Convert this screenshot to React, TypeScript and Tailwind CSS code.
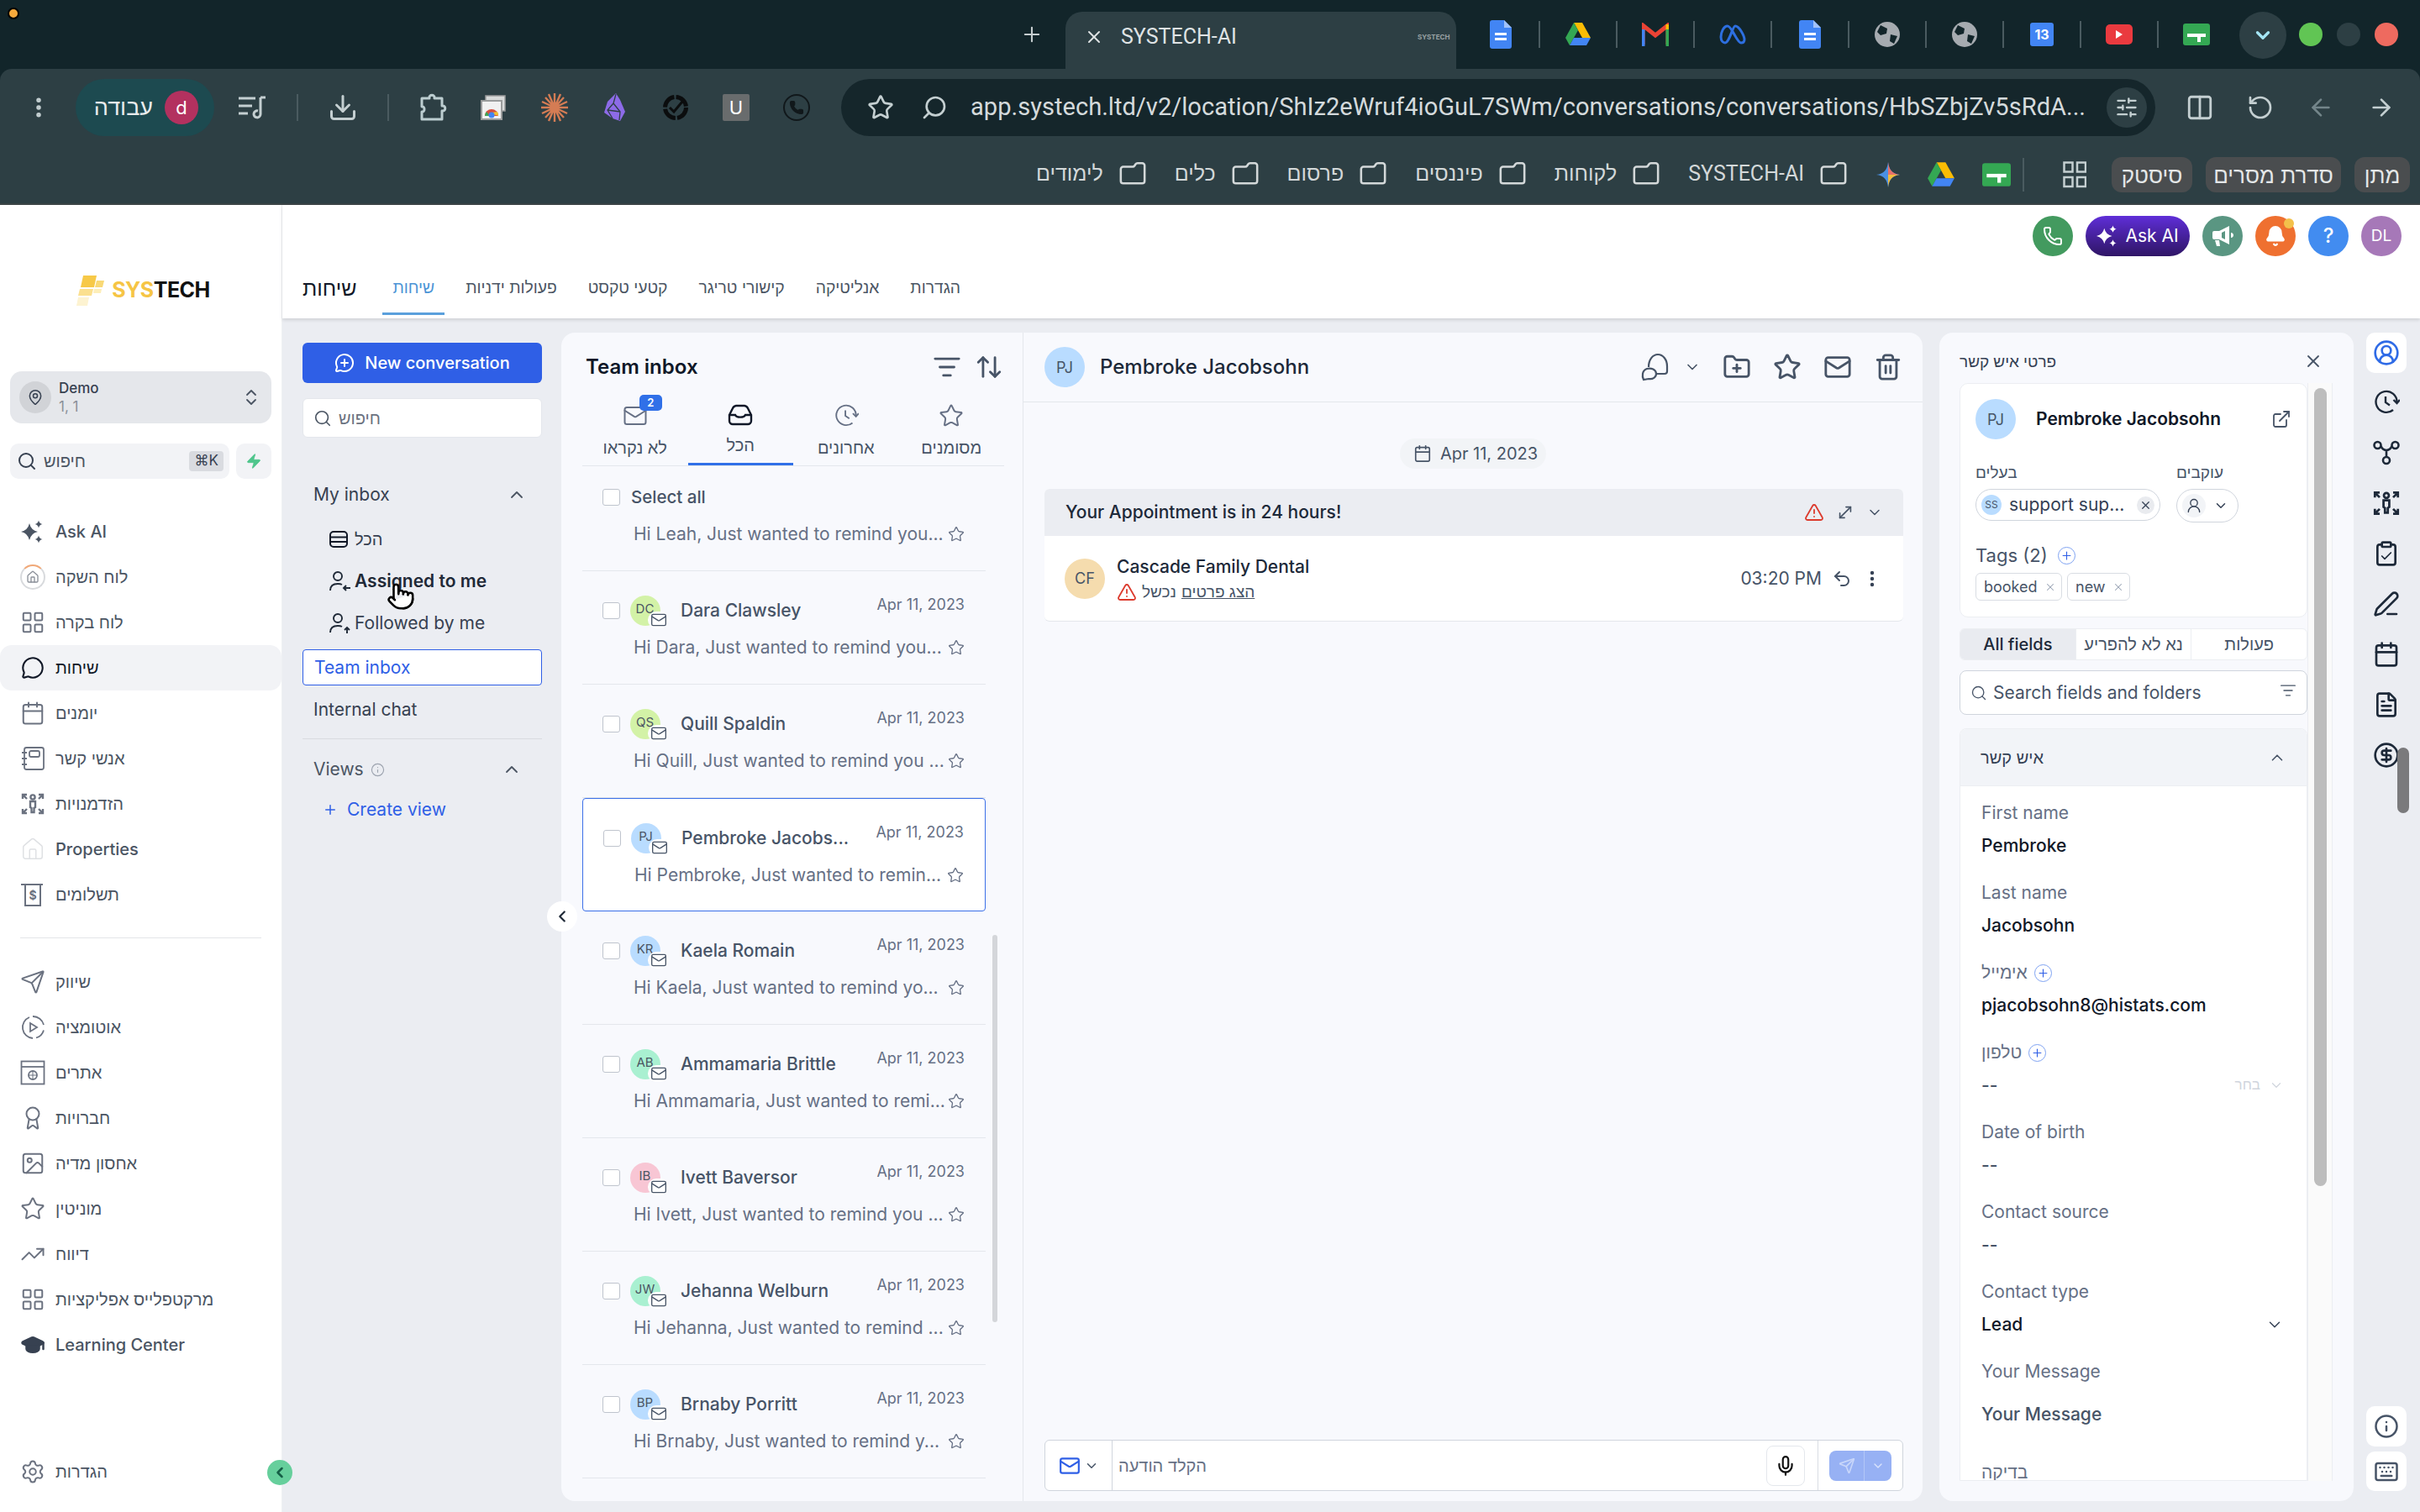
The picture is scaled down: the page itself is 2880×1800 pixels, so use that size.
import {
  ArrowDownUp, ArrowLeft, ArrowRight, Award, Calendar, Check, ChevronDown, ChevronLeft, ChevronUp, ChevronsUpDown,
  CircleDollarSign, CircleUserRound, Clipboard, Download, EllipsisVertical, ExternalLink, FileText, Folder, FolderPlus,
  GraduationCap, Image, Info, Keyboard, LayoutGrid, ListFilter, Mail, MapPin, MessageCircle, MessageCirclePlus,
  Mic, PenLine, Phone, Plus, Pointer, RotateCcw, Search, Send, Settings, SlidersHorizontal, Star,
  Trash2, TrendingUp, TriangleAlert, Undo2, UserRound, X, Zap, Bell, MoveDiagonal, Columns2, House,
} from 'lucide-react';
import type { ReactNode } from 'react';

// --- browser chrome glyphs ---
function DocIcon() {
  return (
    <svg width="26" height="34" viewBox="0 0 26 34">
      <path d="M3 0h14l9 9v22a3 3 0 0 1-3 3H3a3 3 0 0 1-3-3V3a3 3 0 0 1 3-3z" fill="#4285f4" />
      <path d="M17 0l9 9h-9z" fill="#a1c2fa" />
      <rect x="6" y="15" width="14" height="3" fill="#fff" />
      <rect x="6" y="21" width="14" height="3" fill="#fff" />
    </svg>
  );
}

function DriveIcon({ size = 32 }: { size?: number }) {
  return (
    <svg width={size} height={size} viewBox="0 0 32 32">
      <path d="M11 2h10l10 18H21z" fill="#fbbc04" />
      <path d="M11 2L1 20l5 9 10-18z" fill="#34a853" />
      <path d="M6 29h20l5-9H11z" fill="#4285f4" />
    </svg>
  );
}

function GmailIcon() {
  return (
    <svg width="32" height="28" viewBox="0 0 32 28">
      <path d="M1 26V3l15 12L31 3v23" fill="none" stroke="#ea4335" strokeWidth="5" />
      <path d="M1 28V8" stroke="#4285f4" strokeWidth="5" />
      <path d="M31 28V8" stroke="#34a853" strokeWidth="5" />
      <path d="M31 8V2" stroke="#fbbc04" strokeWidth="5" />
    </svg>
  );
}

function MetaIcon() {
  return (
    <svg width="32" height="26" viewBox="0 0 32 26" fill="none" stroke="#2d6fe0" strokeWidth="3">
      <path d="M10 3c-5 0-8 8-8 13 0 5 3 7 5 7 5 0 9-20 12-20 5 0 11 12 11 16 0 3-2 4-4 4-5 0-11-20-16-20z" />
    </svg>
  );
}

function GlobeIcon() {
  return (
    <svg width="32" height="32" viewBox="0 0 32 32">
      <circle cx="16" cy="16" r="15" fill="#a6abb0" />
      <path d="M8 5l8 4-1 6-7 2-4-4zM20 16l8 2-4 9-5-3z" fill="#12252a" />
    </svg>
  );
}

function SheetsIcon({ size = 32 }: { size?: number }) {
  return (
    <svg width={size} height={size} viewBox="0 0 32 32">
      <rect x="0" y="3" width="32" height="26" rx="3" fill="#34a853" />
      <rect x="5" y="15" width="22" height="4" fill="#fff" />
      <rect x="17" y="15" width="4" height="10" fill="#fff" />
    </svg>
  );
}

function PuzzleIcon() {
  return (
    <svg width="34" height="34" viewBox="0 0 34 34" fill="none" stroke="#bccdd0" strokeWidth="3" strokeLinejoin="round">
      <path d="M3 6h9c-1-5 7-5 6 0h9v9c5-1 5 7 0 6v10H3V22c4 1 4-7 0-6z" />
    </svg>
  );
}

function WebStoreIcon() {
  return (
    <svg width="30" height="30" viewBox="0 0 30 30">
      <rect x="6" y="1" width="23" height="18" fill="#d8dada" stroke="#9a9c9c" strokeWidth="1.5" />
      <rect x="1" y="7" width="24" height="22" fill="#f1f1f1" stroke="#9a9c9c" strokeWidth="2" />
      <path d="M5 25a8 8 0 0 1 16 0z" fill="#d9503f" />
      <path d="M13 25a8 8 0 0 1 8 0v0a8 8 0 0 0-1-5l-7 1z" fill="#f2c230" />
      <path d="M5 25a8 8 0 0 1 2-5l4 5z" fill="#3aa757" />
      <circle cx="13" cy="24" r="3.500" fill="#4285f4" />
    </svg>
  );
}

function ObsidianIcon() {
  return (
    <svg width="26" height="34" viewBox="0 0 26 34">
      <path d="M15 0l5 8 6 14-6 11-9-3-10-7 4-13z" fill="#8d6be8" />
      <path d="M15 1l-3 11 8 10-1 10M12 12L5 20l6 10M5 20l15 2" fill="none" stroke="#2d3f44" strokeWidth="1.300" />
    </svg>
  );
}

function TaskRingIcon() {
  return (
    <svg width="32" height="32" viewBox="0 0 32 32" fill="none" stroke="#0b0d0e">
      <circle cx="16" cy="16" r="12.500" strokeWidth="5" strokeDasharray="17.500 2.200" />
      <path d="M9 16l5 5 10-12" strokeWidth="3" />
    </svg>
  );
}

function LogoMark() {
  return (
    <svg width="34" height="36" viewBox="0 0 34 36">
      <path d="M8 0h16l-3 14H5z" fill="#f7c948" />
      <path d="M24 6h9l-2 8h-9z" fill="#f9d976" />
      <path d="M4 16h16l-2 8H2z" fill="#fbe08f" />
      <path d="M21 16h9l-1 5h-9z" fill="#fdeeb9" />
      <path d="M2 26h13l-2 10H0z" fill="#fdf3d1" />
    </svg>
  );
}

// --- app glyphs that lucide doesn't have in this shape ---
function OpportunityIcon({ size = 28, color = '#6b7280' }: { size?: number; color?: string }) {
  return (
    <svg width={size} height={size} viewBox="0 0 28 28" fill="none" stroke={color} strokeWidth="2.4">
      <circle cx="14" cy="6" r="2.600" />
      <path d="M11 11h6v7l-1.500 1v5h-3v-5L11 18z" />
      <path d="M2 8V3h5M2 3l5 5M26 8V3h-5M26 3l-5 5M2 20v5h5M2 25l5-5M26 20v5h-5M26 25l-5-5" />
    </svg>
  );
}

function sparkle(cx: number, cy: number, r: number) {
  const k = r * 0.18;
  return `M${cx} ${cy - r}Q${cx + k} ${cy - k} ${cx + r} ${cy}Q${cx + k} ${cy + k} ${cx} ${cy + r}Q${cx - k} ${cy + k} ${cx - r} ${cy}Q${cx - k} ${cy - k} ${cx} ${cy - r}z`;
}

function AskAiIcon({ size = 28, color = '#4b5563' }: { size?: number; color?: string }) {
  return (
    <svg width={size} height={size} viewBox="0 0 28 28" fill={color}>
      <path d={sparkle(10, 14, 10)} />
      <path d={sparkle(21, 5, 4.5)} />
      <path d={sparkle(21, 23, 4.5)} />
    </svg>
  );
}

function AutomationIcon() {
  return (
    <svg width="30" height="30" viewBox="0 0 30 30" fill="none" stroke="#6b7280" strokeWidth="1.8">
      <path d="M11 3A13 13 0 0 0 15 28M19 27.500a13 13 0 0 0 9-9M28 12A13 13 0 0 0 15 2" />
      <path d="M12 10l8 5-8 5z" />
    </svg>
  );
}

function SitesIcon() {
  return (
    <svg width="30" height="30" viewBox="0 0 30 30" fill="none" stroke="#6b7280" strokeWidth="1.8">
      <rect x="1.500" y="1.500" width="27" height="27" />
      <path d="M1.500 8h27" />
      <circle cx="15" cy="18" r="5" />
      <path d="M10 18h10M15 13v10" strokeWidth="1" />
    </svg>
  );
}

function ContactsIcon() {
  return (
    <svg width="30" height="30" viewBox="0 0 30 30" fill="none" stroke="#6b7280" strokeWidth="1.8">
      <rect x="5" y="2" width="23" height="26" rx="2.500" />
      <rect x="11" y="6" width="12" height="7" rx="2" />
      <path d="M2 8h6M2 15h6M2 22h6" />
    </svg>
  );
}

function PaymentsIcon() {
  return (
    <svg width="30" height="30" viewBox="0 0 30 30" fill="none" stroke="#6b7280" strokeWidth="2">
      <path d="M1 3h26M6 3v25h18V3" />
      <text x="15" y="21" textAnchor="middle" fontSize="14" fontWeight="700" fill="#6b7280" stroke="none">$</text>
    </svg>
  );
}

function RowsIcon() {
  return (
    <svg width="22" height="22" viewBox="0 0 22 22" fill="none" stroke="#111827" strokeWidth="2">
      <rect x="1" y="2" width="20" height="18" rx="4" />
      <path d="M1 8.500h20M1 14h20" />
    </svg>
  );
}

function PersonArrowIcon({ dir }: { dir: 'left' | 'up' }) {
  return (
    <svg width="26" height="26" viewBox="0 0 26 26" fill="none" stroke="#1f2937" strokeWidth="1.9">
      <circle cx="10" cy="7" r="5" />
      <path d="M1 24c0-6 4-8 9-8 2 0 4 .4 5 1" />
      {dir === 'left' ? <path d="M25 21h-8M20 18l-3 3 3 3" /> : <path d="M21 25v-7M18 21l3-3 3 3" />}
    </svg>
  );
}

function TrayIcon() {
  return (
    <svg width="30" height="26" viewBox="0 0 30 26" fill="none" stroke="#101828" strokeWidth="2.4">
      <path d="M2 13l4-8a5 5 0 0 1 4-3h10a5 5 0 0 1 4 3l4 8v7a4 4 0 0 1-4 4H6a4 4 0 0 1-4-4z" />
      <path d="M2 13h7c1.500 3.500 10.500 3.500 12 0h7" />
    </svg>
  );
}

function ChatsIcon() {
  return (
    <svg width="34" height="34" viewBox="0 0 34 34" fill="none" stroke="#475467" strokeWidth="2.2">
      <path d="M9 17C9 8 14 2 20 2s11 6 11 14v6a3 3 0 0 1-3 3H19" />
      <path d="M3 32c-2-4-2-11 4-13 5-1.500 11 1 11 6 0 4-4 7-9 6z" />
    </svg>
  );
}

// clock with a clockwise arrow, used in the list tabs and the rail
function RecentIcon({ size = 32, color = '#1d2939', width = 2.4 }: { size?: number; color?: string; width?: number }) {
  return (
    <svg width={size} height={size} viewBox="0 0 32 32" fill="none" stroke={color} strokeWidth={width}>
      <path d="M24 25A12.500 12.500 0 1 1 28.500 16" />
      <path d="M24.500 13l4 4 3.500-4" />
      <path d="M15 9v7l5 3.500" />
    </svg>
  );
}

function NetworkIcon() {
  return (
    <svg width="32" height="30" viewBox="0 0 32 30" fill="none" stroke="#1d2939" strokeWidth="2.6">
      <circle cx="5.500" cy="6" r="4" /><circle cx="26.500" cy="6" r="4" /><circle cx="16" cy="24" r="4" />
      <path d="M9.500 7c1 3 4 5 6.500 5s5.500-2 6.500-5M16 12v8" />
    </svg>
  );
}

function HornIcon() {
  return (
    <svg width="28" height="28" viewBox="0 0 28 28" fill="#fff">
      <path d="M2 10a2 2 0 0 1 2-2h6l12-6v22l-12-6H4a2 2 0 0 1-2-2z" />
      <path d="M5 19h5l1 7H7z" />
      <path d="M24 10c2 0 3 1.500 3 3s-1 3-3 3z" />
      <path d="M12 7l8-4v20l-8-4z" fill="#5a9682" transform="translate(7 6.500) scale(.5)" />
    </svg>
  );
}

function Sep({ h = 'h-[32px]' }: { h?: string }) {
  return <div className={`w-[2px] ${h} bg-[#4a5b60]`} />;
}

function TabStrip() {
  const icons: ReactNode[] = [
    <DocIcon />, <DriveIcon />, <GmailIcon />, <MetaIcon />, <DocIcon />, <GlobeIcon />, <GlobeIcon />,
    <div className="w-[28px] h-[28px] rounded-[3px] bg-[#4285f4] text-white text-[16px] font-bold flex items-center justify-center">13</div>,
    <div className="w-[32px] h-[24px] rounded-[5px] bg-[#ea3a3f] flex items-center justify-center">
      <div className="w-0 h-0 border-y-[5px] border-y-transparent border-l-[8px] border-l-white" />
    </div>,
    <SheetsIcon />,
  ];
  return (
    <div className="h-[82px] shrink-0 bg-[#12252a] flex justify-end pr-[26px] text-[#dfe3e4]">
      <div className="flex items-center h-full pr-[26px]">
        <Plus size={28} strokeWidth={1.8} className="text-[#c5cdcf]" />
      </div>
      <div className="w-[465px] h-[68px] mt-[14px] bg-[#2d3f44] rounded-t-[20px] flex items-center pl-[22px] pr-[14px] pb-[8px]">
        <X size={24} strokeWidth={2} className="text-[#dfe3e4]" />
        <span className="ml-[20px] text-[25px] font-['Roboto'] flex-1">SYSTECH-AI</span>
        <div className="w-[34px] h-[22px] flex items-center">
          <div className="w-[5px] h-[20px] bg-[#e8c14c]" />
          <div className="ml-[2px] text-[8px] text-[#9ba3a5] font-bold">SYSTECH</div>
        </div>
      </div>
      <div className="flex items-center h-full ml-[8px]">
        {icons.map((icon, i) => (
          <div key={i} className="flex items-center">
            {i > 0 && <Sep />}
            <div className="w-[90px] flex items-center justify-center">{icon}</div>
          </div>
        ))}
      </div>
      <div className="w-[56px] h-[56px] mt-[14px] ml-[6px] rounded-full bg-[#2d3f44] flex items-center justify-center">
        <ChevronDown size={26} strokeWidth={3} className="text-[#a5e6f5]" />
      </div>
      <div className="flex items-center gap-[17px] h-full ml-[15px]">
        <div className="w-[28px] h-[28px] rounded-full bg-[#61c554]" />
        <div className="w-[28px] h-[28px] rounded-full bg-[#2d3f44]" />
        <div className="w-[28px] h-[28px] rounded-full bg-[#ee6a5f]" />
      </div>
    </div>
  );
}

function Bookmark({ label }: { label: string }) {
  return (
    <div className="flex items-center gap-[18px] text-[25px] text-[#d3d8d9] font-['Roboto','Liberation_Sans',sans-serif]">
      <span>{label}</span>
      <Folder size={34} strokeWidth={1.8} className="text-[#d3d8d9] -scale-x-100" />
    </div>
  );
}

function Toolbar() {
  const c = 'text-[#c4cfd1]';
  return (
    <div className="h-[162px] shrink-0 bg-[#2d3f44] rounded-t-[14px] border-b-[2px] border-[#3b4446] flex flex-col">
      <div className="h-[68px] mt-[12px] flex items-center pl-[31px]">
        <EllipsisVertical size={30} strokeWidth={2.4} className={c} />
        <div className="ml-[29px] w-[165px] h-[68px] rounded-full bg-[#1d4a50] flex items-center justify-end pr-[19px] gap-[14px]">
          <span className="text-[27px] text-[#e9eced]">עבודה</span>
          <div className="w-[40px] h-[40px] rounded-full bg-[#b3315f] text-white text-[22px] flex items-center justify-center">d</div>
        </div>
        <div className="ml-[28px] w-[34px] flex justify-center">
          <svg width="32" height="32" viewBox="0 0 32 32" fill="none" stroke="#c4cfd1" strokeWidth="3">
            <path d="M0 5h20M0 14h16M0 23h11" />
            <path d="M26 4v20a4 4 0 1 1-3-4" />
            <path d="M26 4h6" />
          </svg>
        </div>
        <div className="ml-[36px]"><Sep /></div>
        <Download size={36} strokeWidth={2} className={`ml-[35px] ${c}`} />
        <div className="ml-[35px]"><Sep /></div>
        <div className="ml-[36px]"><PuzzleIcon /></div>
        <div className="ml-[39px]"><WebStoreIcon /></div>
        <svg className="ml-[42px]" width="32" height="34" viewBox="0 0 32 34" stroke="#d47c54" strokeWidth="2.4">
          <path d="M16 0v34M0 17h32M5 5l22 24M27 5L5 29M9 1l14 32M23 1L9 33M1 10l30 14M31 10L1 24" />
        </svg>
        <div className="ml-[42px]"><ObsidianIcon /></div>
        <div className="ml-[44px]"><TaskRingIcon /></div>
        <div className="ml-[40px] w-[32px] h-[32px] bg-[#696c6d] rounded-[2px] text-white text-[22px] flex items-center justify-center">U</div>
        <div className="ml-[40px] w-[32px] h-[32px] rounded-full border-[2px] border-[#11181b] flex items-center justify-center">
          <Phone size={18} strokeWidth={1.5} className="text-[#11181b] fill-[#11181b]" />
        </div>
        <div className="ml-[37px] w-[1564px] h-[68px] rounded-full bg-[#15262b] flex items-center pl-[31px] relative">
          <Star size={32} strokeWidth={2} className={c} />
          <Search size={32} strokeWidth={2} className={`ml-[32px] -scale-x-100 ${c}`} />
          <span className="ml-[27px] text-[29.1px] text-[#d4dadc] font-['Roboto'] whitespace-nowrap">
            app.systech.ltd/v2/location/ShIz2eWruf4ioGuL7SWm/conversations/conversations/HbSZbjZv5sRdA...
          </span>
          <div className="absolute right-[10px] top-[10px] w-[48px] h-[48px] rounded-full bg-[#2d3f44] flex items-center justify-center">
            <SlidersHorizontal size={28} strokeWidth={2} className={c} />
          </div>
        </div>
        <Columns2 size={34} strokeWidth={2} className={`ml-[36px] ${c}`} />
        <RotateCcw size={32} strokeWidth={2} className={`ml-[39px] ${c}`} />
        <ArrowLeft size={32} strokeWidth={2} className="ml-[40px] text-[#73858a]" />
        <ArrowRight size={32} strokeWidth={2} className={`ml-[40px] ${c}`} />
      </div>
      <div className="flex-1 flex items-start justify-end gap-[33px] pr-[12px] pt-[26px]">
        <Bookmark label="לימודים" />
        <Bookmark label="כלים" />
        <Bookmark label="פרסום" />
        <Bookmark label="פיננסים" />
        <Bookmark label="לקוחות" />
        <Bookmark label="SYSTECH-AI" />
        <div className="flex items-center gap-[32px] h-[40px] ml-[1px]">
          <svg width="28" height="30" viewBox="0 0 28 30">
            <path d="M14 0c1 9 5 14 14 15-9 1-13 6-14 15-1-9-5-14-14-15 9-1 13-6 14-15z" fill="#4a90e2" />
            <path d="M14 0c1 9 5 14 14 15H14z" fill="#e8706a" />
            <path d="M14 15v15c1-9 5-14 14-15z" fill="#f1bb3c" />
          </svg>
          <DriveIcon size={34} />
          <SheetsIcon size={34} />
        </div>
        <div className="flex items-center h-[40px] gap-[46px] -ml-[19px]">
          <Sep h="h-[40px]" />
          <svg width="28" height="32" viewBox="0 0 28 32" fill="none" stroke="#c4cfd1" strokeWidth="2.5">
            <rect x="1.500" y="1.500" width="10" height="11" /><rect x="17" y="1.500" width="10" height="11" />
            <rect x="1.500" y="19" width="10" height="11" /><rect x="17" y="19" width="10" height="11" />
          </svg>
        </div>
        <div className="flex gap-[16px] -ml-[3px] -mt-[1px]">
          <div className="w-[96px] h-[42px] rounded-[12px] bg-[#4a4d4f] text-[#e4e7e8] text-[26px] flex items-center justify-center">סיסטק</div>
          <div className="w-[161px] h-[42px] rounded-[12px] bg-[#4a4d4f] text-[#e4e7e8] text-[26px] flex items-center justify-center">סדרת מסרים</div>
          <div className="w-[66px] h-[42px] rounded-[12px] bg-[#4a4d4f] text-[#e4e7e8] text-[26px] flex items-center justify-center">מתן</div>
        </div>
      </div>
    </div>
  );
}

type NavItem = { label: string; icon: ReactNode; active?: boolean; strong?: boolean };

const ic = { size: 30, strokeWidth: 1.6, className: 'text-[#6b7280]' };

const navTop: NavItem[] = [
  { label: 'Ask AI', icon: <AskAiIcon />, strong: true },
  {
    label: 'לוח השקה',
    icon: (
      <div className="w-[30px] h-[30px] rounded-full border-[2px] border-[#d8dadd] border-t-[#f0a878] flex items-center justify-center">
        <House size={16} strokeWidth={2} className="text-[#8b9099]" />
      </div>
    ),
  },
  { label: 'לוח בקרה', icon: <LayoutGrid {...ic} /> },
  { label: 'שיחות', icon: <MessageCircle size={28} strokeWidth={1.8} className="text-[#111827]" />, active: true },
  { label: 'יומנים', icon: <Calendar {...ic} /> },
  { label: 'אנשי קשר', icon: <ContactsIcon /> },
  { label: 'הזדמנויות', icon: <OpportunityIcon /> },
  { label: 'Properties', icon: <House size={30} strokeWidth={1.2} className="text-[#dfe1e4]" />, strong: true },
  { label: 'תשלומים', icon: <PaymentsIcon /> },
];

const navBottom: NavItem[] = [
  { label: 'שיווק', icon: <Send {...ic} /> },
  { label: 'אוטומציה', icon: <AutomationIcon /> },
  { label: 'אתרים', icon: <SitesIcon /> },
  { label: 'חברויות', icon: <Award {...ic} /> },
  { label: 'אחסון מדיה', icon: <Image {...ic} /> },
  { label: 'מוניטין', icon: <Star {...ic} /> },
  { label: 'דיווח', icon: <TrendingUp {...ic} /> },
  { label: 'מרקטפלייס אפליקציות', icon: <LayoutGrid {...ic} /> },
  { label: 'Learning Center', icon: <GraduationCap size={30} strokeWidth={2} className="text-[#374151] fill-[#374151]" />, strong: true },
];

function NavRow({ item }: { item: NavItem }) {
  return (
    <div className={`h-[54px] flex items-center pl-[24px] rounded-[14px] ${item.active ? 'bg-[#f2f3f6]' : ''}`}>
      <div className="w-[30px] flex justify-center">{item.icon}</div>
      <span
        className={`ml-[12px] text-[20px] ${item.active ? 'text-[#111827] font-medium' : item.strong ? 'text-[#4b5563] font-medium' : 'text-[#4b5563]'}`}
      >
        {item.label}
      </span>
    </div>
  );
}

function Sidebar() {
  return (
    <div className="w-[336px] shrink-0 bg-white flex flex-col border-r border-[#eef0f3] relative">
      <div className="h-[198px] flex items-center justify-center pl-[6px] pt-[5px]">
        <LogoMark />
        <span className="ml-[8px] text-[25px] font-bold text-[#111] tracking-[-0.5px]">
          <span className="text-[#f6c545]">SYS</span>TECH
        </span>
      </div>
      <div className="mx-[12px] h-[62px] rounded-[14px] bg-[#e5e7eb] flex items-center pl-[11px] pr-[12px]">
        <div className="w-[38px] h-[38px] rounded-full bg-[#d1d3d7] flex items-center justify-center">
          <MapPin size={20} strokeWidth={1.8} className="text-[#374151]" />
        </div>
        <div className="ml-[9px] flex-1 flex flex-col leading-[22px]">
          <span className="text-[17px] font-medium text-[#374151]">Demo</span>
          <span className="text-[17px] text-[#8b9099]">1, 1</span>
        </div>
        <ChevronsUpDown size={24} strokeWidth={1.8} className="text-[#4b5563]" />
      </div>
      <div className="mx-[12px] mt-[24px] flex gap-[8px]">
        <div className="w-[262px] h-[42px] rounded-[10px] bg-[#f2f3f6] flex items-center pl-[8px] pr-[7px]">
          <Search size={24} strokeWidth={2} className="text-[#374151]" />
          <span className="ml-[8px] flex-1 text-[20px] text-[#4b5563]">חיפוש</span>
          <div className="w-[41px] h-[24px] rounded-[4px] bg-[#d9dbe0] text-[17px] text-[#374151] flex items-center justify-center">⌘K</div>
        </div>
        <div className="w-[42px] h-[42px] rounded-[10px] bg-[#f2f3f6] flex items-center justify-center">
          <Zap size={20} strokeWidth={1} className="text-[#4fc58c] fill-[#4fc58c]" />
        </div>
      </div>
      <div className="mt-[36px]">
        {navTop.map((n) => <NavRow key={n.label} item={n} />)}
      </div>
      <div className="mx-[24px] mt-[24px] h-px bg-[#e3e5e8]" />
      <div className="mt-[25px]">
        {navBottom.map((n) => <NavRow key={n.label} item={n} />)}
      </div>
      <div className="mt-auto mb-[21px]">
        <NavRow item={{ label: 'הגדרות', icon: <Settings {...ic} /> }} />
      </div>
      <div className="absolute left-[318px] top-[1494px] w-[30px] h-[30px] rounded-full bg-[#66cf9c] flex items-center justify-center">
        <ChevronLeft size={20} strokeWidth={3} className="text-[#155e46]" />
      </div>
    </div>
  );
}

function TopBar() {
  const tabs = ['הגדרות', 'אנליטיקה', 'קישורי טריגר', 'קטעי טקסט', 'פעולות ידניות'];
  return (
    <div className="h-[135px] shrink-0 bg-white shadow-[0_2px_4px_rgba(0,0,0,0.12)] relative flex flex-col">
      <div className="flex justify-end gap-[15px] pt-[13px] pr-[22px]">
        <div className="w-[48px] h-[48px] rounded-full bg-[#439a5f] flex items-center justify-center"><Phone size={24} strokeWidth={2} className="text-white" /></div>
        <div className="w-[124px] h-[48px] rounded-full bg-gradient-to-b from-[#5f2ed8] to-[#2f1566] flex items-center justify-center gap-[8px]">
          <AskAiIcon size={26} color="#fff" />
          <span className="text-[21px] text-white">Ask AI</span>
        </div>
        <div className="w-[48px] h-[48px] rounded-full bg-[#5a9682] flex items-center justify-center"><HornIcon /></div>
        <div className="w-[48px] h-[48px] rounded-full bg-[#ef7030] flex items-center justify-center relative">
          <Bell size={26} strokeWidth={2} className="text-white fill-white" />
          <div className="absolute right-[2px] top-[3px] w-[12px] h-[12px] rounded-full bg-[#f3c14b]" />
        </div>
        <div className="w-[48px] h-[48px] rounded-full bg-[#428cf0] text-white text-[24px] font-medium flex items-center justify-center">?</div>
        <div className="w-[48px] h-[48px] rounded-full bg-[#a678b8] text-white text-[19px] flex items-center justify-center">DL</div>
      </div>
      <div className="mt-[8px] pl-[24px] flex items-center h-[62px]">
        <span className="text-[25px] font-medium text-[#111827] mr-[31px]">שיחות</span>
        <div className="h-full px-[12px] border-b-[3px] border-[#5aa0dc] flex items-center text-[19.3px] text-[#4b94d6]">שיחות</div>
        <div className="flex flex-row-reverse gap-[13px] h-full ml-[13px]">
          {tabs.map((t) => (
            <div key={t} className="px-[12px] flex items-center text-[19.3px] text-[#4b5563] whitespace-nowrap border-b-[3px] border-transparent">{t}</div>
          ))}
        </div>
      </div>
    </div>
  );
}

function InboxColumn() {
  const sub = 'h-[50px] flex items-center pl-[32px] text-[22px]';
  return (
    <div className="w-[285px] shrink-0 pt-[12px] flex flex-col relative">
      <div className="h-[48px] rounded-[6px] bg-[#2f5fe6] flex items-center justify-center gap-[12px] text-white text-[20px] font-medium">
        <MessageCirclePlus size={24} strokeWidth={2} />
        New conversation
      </div>
      <div className="mt-[18px] h-[47px] rounded-[6px] bg-white border border-[#e4e7ec] flex items-center pl-[12px] gap-[8px]">
        <Search size={22} strokeWidth={1.8} className="text-[#4b5563]" />
        <span className="text-[20px] text-[#6b7280]">חיפוש</span>
      </div>
      <div className="mt-[46px] h-[44px] flex items-center justify-between pl-[13px] pr-[18px]">
        <span className="text-[21px] text-[#374151]">My inbox</span>
        <ChevronUp size={24} strokeWidth={1.8} className="text-[#4b5563]" />
      </div>
      <div className={`${sub} mt-[6px] text-[#374151]`}>
        <RowsIcon />
        <span className="ml-[8px] text-[20px]">הכל</span>
      </div>
      <div className={`${sub} font-semibold text-[#1f2937] pl-[30px]`}>
        <PersonArrowIcon dir="left" />
        <span className="ml-[4px] text-[21px]">Assigned to me</span>
      </div>
      <div className={`${sub} text-[#374151] pl-[30px]`}>
        <PersonArrowIcon dir="up" />
        <span className="ml-[4px] text-[21px]">Followed by me</span>
      </div>
      <div className="mt-[6px] h-[43px] rounded-[4px] border border-[#2f5fe6] bg-white flex items-center pl-[13px] text-[21px] text-[#2f5fe6]">Team inbox</div>
      <div className="h-[57px] flex items-center pl-[13px] text-[21px] text-[#374151]">Internal chat</div>
      <div className="mt-[6px] h-px bg-[#d9dbe0]" />
      <div className="mt-[14px] h-[44px] flex items-center pl-[13px] pr-[24px]">
        <span className="text-[21px] text-[#4b5563]">Views</span>
        <Info size={17} strokeWidth={1.6} className="ml-[8px] text-[#9ca3af]" />
        <ChevronUp size={24} strokeWidth={1.8} className="ml-auto text-[#4b5563]" />
      </div>
      <div className="mt-[4px] h-[44px] flex items-center pl-[24px] gap-[11px] text-[21px] text-[#2f5fe6]">
        <Plus size={18} strokeWidth={2} />
        Create view
      </div>
      <Pointer size={34} strokeWidth={1.8} className="absolute left-[100px] top-[297px] text-black fill-white" />
    </div>
  );
}

type Conv = { name: string; initials: string; color: string; preview: string };

const convs: Conv[] = [
  { name: 'Dara Clawsley', initials: 'DC', color: 'bg-[#d3f2a7]', preview: 'Hi Dara, Just wanted to remind you...' },
  { name: 'Quill Spaldin', initials: 'QS', color: 'bg-[#d3f2a7]', preview: 'Hi Quill, Just wanted to remind you ...' },
  { name: 'Pembroke Jacobs...', initials: 'PJ', color: 'bg-[#b9dcff]', preview: 'Hi Pembroke, Just wanted to remin...' },
  { name: 'Kaela Romain', initials: 'KR', color: 'bg-[#b9dcff]', preview: 'Hi Kaela, Just wanted to remind yo...' },
  { name: 'Ammamaria Brittle', initials: 'AB', color: 'bg-[#a9f0d1]', preview: 'Hi Ammamaria, Just wanted to remi...' },
  { name: 'Ivett Baversor', initials: 'IB', color: 'bg-[#f8c6d4]', preview: 'Hi Ivett, Just wanted to remind you ...' },
  { name: 'Jehanna Welburn', initials: 'JW', color: 'bg-[#a9f0d1]', preview: 'Hi Jehanna, Just wanted to remind ...' },
  { name: 'Brnaby Porritt', initials: 'BP', color: 'bg-[#b9dcff]', preview: 'Hi Brnaby, Just wanted to remind y...' },
];

function ConvRow({ c }: { c: Conv }) {
  const selected = c.initials === 'PJ';
  return (
    <div className={`h-[135px] shrink-0 pl-[24px] pr-[25px] pt-[28px] ${selected ? 'bg-white border border-[#3b6fe8] rounded-[4px]' : 'border-b border-[#e4e7ec]'}`}>
      <div className="h-[38px] flex items-center">
        <div className="w-[21px] h-[20px] rounded-[3px] border border-[#bfc4cd] bg-white" />
        <div className={`ml-[12px] w-[36px] h-[36px] rounded-full ${c.color} relative flex items-center justify-center text-[15px] text-[#4b5563]`}>
          <span className="-mt-[3px] -ml-[1px]">{c.initials}</span>
          <div className="absolute left-[21px] top-[19px] w-[25px] h-[20px] rounded-full bg-white flex items-center justify-center">
            <Mail size={20} strokeWidth={1.6} className="text-[#475467]" />
          </div>
        </div>
        <span className="ml-[24px] text-[21px] font-medium text-[#475467] whitespace-nowrap">{c.name}</span>
        <span className="ml-auto mb-[16px] text-[18px] text-[#667085] whitespace-nowrap">Apr 11, 2023</span>
      </div>
      <div className="mt-[10px] h-[30px] flex items-center pl-[37px]">
        <span className="text-[21px] text-[#667085] whitespace-nowrap flex-1">{c.preview}</span>
        <Star size={20} strokeWidth={1.6} className="text-[#667085]" />
      </div>
    </div>
  );
}

function ListPane() {
  const tabCls = 'w-[125.5px] flex flex-col items-center justify-end pb-[6px] gap-[8px] text-[20px] text-[#475467]';
  return (
    <div className="w-[550px] shrink-0 border-r border-[#e4e7ec] flex flex-col relative overflow-hidden rounded-l-[16px]">
      <div className="h-[82px] shrink-0 flex items-center pl-[29px] pr-[23px]">
        <span className="text-[24px] font-semibold text-[#101828]">Team inbox</span>
        <ListFilter size={34} strokeWidth={2} className="ml-auto text-[#475467]" />
        <ArrowDownUp size={34} strokeWidth={2} className="ml-[16px] text-[#475467] -scale-x-100" />
      </div>
      <div className="mx-[25px] w-[502px] h-[77px] shrink-0 border-b border-[#e4e7ec] flex">
        <div className={tabCls}>
          <div className="relative">
            <Mail size={30} strokeWidth={1.6} className="text-[#667085]" />
            <div className="absolute left-[20px] -top-[10px] w-[27px] h-[19px] rounded-[5px] bg-[#3070e8] text-white text-[13px] font-semibold flex items-center justify-center">2</div>
          </div>
          לא נקראו
        </div>
        <div className={`${tabCls} text-[#101828] border-b-[3px] border-[#3070e8] pb-[3px]`}>
          <TrayIcon />
          הכל
        </div>
        <div className={tabCls}>
          <RecentIcon size={30} color="#667085" width={2} />
          אחרונים
        </div>
        <div className={tabCls}>
          <Star size={30} strokeWidth={1.6} className="text-[#667085]" />
          מסומנים
        </div>
      </div>
      <div className="ml-[25px] w-[480px] flex-1 flex flex-col overflow-hidden">
        <div className="h-[125px] shrink-0 border-b border-[#e4e7ec] pl-[24px] pr-[25px] pt-[23px]">
          <div className="h-[28px] flex items-center">
            <div className="w-[21px] h-[20px] rounded-[3px] border border-[#bfc4cd] bg-white" />
            <span className="ml-[13px] text-[20.5px] font-medium text-[#475467]">Select all</span>
          </div>
          <div className="mt-[15px] h-[30px] flex items-center pl-[37px]">
            <span className="text-[21px] text-[#667085] flex-1 whitespace-nowrap">Hi Leah, Just wanted to remind you...</span>
            <Star size={20} strokeWidth={1.6} className="text-[#667085]" />
          </div>
        </div>
        {convs.map((c) => <ConvRow key={c.initials} c={c} />)}
      </div>
      <div className="absolute left-[513px] top-[717px] w-[6px] h-[461px] rounded-full bg-[#d4d6da]" />
    </div>
  );
}

function ConversationPane() {
  return (
    <div className="flex-1 flex flex-col">
      <div className="h-[83px] shrink-0 border-b border-[#e4e7ec] flex items-center pl-[25px] pr-[24px]">
        <div className="w-[48px] h-[48px] rounded-full bg-[#b9dcff] text-[18px] text-[#475467] flex items-center justify-center">PJ</div>
        <span className="ml-[18px] text-[24px] font-medium text-[#1d2939]">Pembroke Jacobsohn</span>
        <div className="ml-auto"><ChatsIcon /></div>
        <ChevronDown size={20} strokeWidth={2} className="ml-[17px] text-[#475467]" />
        <FolderPlus size={34} strokeWidth={2} className="ml-[26px] text-[#475467]" />
        <Star size={34} strokeWidth={2} className="ml-[26px] text-[#475467]" />
        <Mail size={34} strokeWidth={2} className="ml-[26px] text-[#475467]" />
        <Trash2 size={34} strokeWidth={2} className="ml-[26px] text-[#475467]" />
      </div>
      <div className="mt-[43px] self-center w-[174px] h-[36px] rounded-full bg-[#f2f4f7] flex items-center justify-center gap-[10px] text-[20px] text-[#475467] pl-[6px]">
        <Calendar size={22} strokeWidth={1.8} />
        Apr 11, 2023
      </div>
      <div className="ml-[25px] mr-[23px] mt-[24px] rounded-[6px] overflow-hidden border-b border-[#e4e7ec] bg-white">
        <div className="h-[56px] bg-[#ebedf2] flex items-center pl-[25px] pr-[24px]">
          <span className="text-[21px] font-medium text-[#1d2939]">Your Appointment is in 24 hours!</span>
          <TriangleAlert size={24} strokeWidth={1.8} className="ml-auto text-[#dc3b2e]" />
          <MoveDiagonal size={22} strokeWidth={1.8} className="ml-[14px] text-[#475467]" />
          <ChevronDown size={20} strokeWidth={1.8} className="ml-[14px] text-[#475467]" />
        </div>
        <div className="h-[101px] flex items-center pl-[24px] pr-[25px]">
          <div className="w-[48px] h-[48px] rounded-full bg-[#f5dcae] text-[18px] text-[#475467] flex items-center justify-center">CF</div>
          <div className="ml-[14px] flex flex-col gap-[2px]">
            <span className="text-[21px] font-medium text-[#1d2939] leading-[30px]">Cascade Family Dental</span>
            <div className="flex items-center gap-[6px] text-[19px] text-[#475467] leading-[26px]">
              <TriangleAlert size={24} strokeWidth={1.8} className="text-[#dc3b2e]" />
              <span>נכשל</span>
              <span className="underline">הצג פרטים</span>
            </div>
          </div>
          <span className="ml-auto text-[21px] text-[#475467]">03:20 PM</span>
          <Undo2 size={24} strokeWidth={2} className="ml-[12px] text-[#475467]" />
          <EllipsisVertical size={24} strokeWidth={2.4} className="ml-[12px] text-[#344054]" />
        </div>
      </div>
      <div className="mt-auto ml-[25px] mr-[23px] mb-[12px] h-[61px] rounded-[6px] border border-[#d0d5dd] bg-white flex items-center">
        <div className="w-[80px] h-full border-r border-[#d0d5dd] flex items-center justify-center gap-[4px]">
          <Mail size={26} strokeWidth={2} className="text-[#2f5fe6]" />
          <ChevronDown size={18} strokeWidth={2} className="text-[#475467]" />
        </div>
        <span className="ml-[7px] flex-1 text-[20px] text-[#667085]">הקלד הודעה</span>
        <div className="w-[46px] h-[48px] rounded-[8px] border border-[#e4e7ec] flex items-center justify-center">
          <Mic size={26} strokeWidth={2} className="text-[#111]" />
        </div>
        <div className="ml-[15px] h-full border-l border-[#d9dde3] pl-[13px] pr-[13px] flex items-center">
          <div className="w-[74px] h-[36px] rounded-[8px] bg-[#97b1f4] flex items-center">
            <div className="w-[42px] h-full border-r border-[#b3c7f7] flex items-center justify-center">
              <Send size={20} strokeWidth={2} className="text-[#c8d6fa]" />
            </div>
            <ChevronDown size={16} strokeWidth={2} className="ml-[8px] text-[#dbe4fb]" />
          </div>
        </div>
      </div>
    </div>
  );
}

function Field({ label, value, plus, tall, muted, children }: { label: string; value?: string; plus?: boolean; tall?: boolean; muted?: boolean; children?: ReactNode }) {
  return (
    <div className={`${tall ? 'h-[120px]' : 'h-[95px]'} shrink-0 pl-[25px] pr-[27px] flex flex-col`}>
      <div className="h-[30px] flex items-center gap-[8px] text-[21px] text-[#667085]">
        <span>{label}</span>
        {plus && (
          <div className="w-[21px] h-[21px] rounded-full border border-[#7ea2f2] flex items-center justify-center">
            <Plus size={15} strokeWidth={1.8} className="text-[#2f5fe6]" />
          </div>
        )}
      </div>
      {value && (
        <div className={`${tall ? 'mt-[21px]' : 'mt-[9px]'} h-[30px] flex items-center justify-between text-[21px] font-medium ${muted ? 'text-[#475467]' : 'text-[#101828]'}`}>
          <span>{value}</span>
          {children}
        </div>
      )}
    </div>
  );
}

function ContactPanel() {
  return (
    <div className="w-[493px] shrink-0 h-[1391px] rounded-[16px] bg-[#f8f9fd] flex flex-col">
      <div className="h-[60px] shrink-0 flex items-center pl-[24px] pr-[36px] pt-[8px]">
        <span className="mt-[3px] text-[19px] font-medium text-[#344054]">פרטי איש קשר</span>
        <X size={24} strokeWidth={1.8} className="ml-auto text-[#475467]" />
      </div>
      <div className="ml-[24px] h-[1307px] flex overflow-hidden">
        <div className="w-[414px] shrink-0 flex flex-col">
          <div className="h-[279px] shrink-0 rounded-[10px] border border-[#eceef2] bg-white pl-[18px] pr-[18px]">
            <div className="h-[84px] flex items-center">
              <div className="w-[48px] h-[48px] rounded-full bg-[#b9dcff] text-[18px] text-[#475467] flex items-center justify-center">PJ</div>
              <span className="ml-[24px] text-[21px] font-semibold text-[#101828]">Pembroke Jacobsohn</span>
              <ExternalLink size={24} strokeWidth={1.8} className="ml-auto text-[#475467]" />
            </div>
            <div className="mt-[9px] flex gap-[19px]">
              <div className="w-[220px]">
                <div className="h-[26px] flex items-center text-[19px] text-[#475467]">בעלים</div>
                <div className="mt-[6px] h-[38px] rounded-full border border-[#d0d5dd] flex items-center pl-[6px] pr-[6px]">
                  <div className="w-[24px] h-[24px] rounded-full bg-[#b9dcff] text-[12px] text-[#475467] flex items-center justify-center">SS</div>
                  <span className="ml-[9px] flex-1 text-[21px] text-[#344054]">support sup...</span>
                  <div className="w-[21px] h-[21px] rounded-full bg-[#e9ebef] flex items-center justify-center"><X size={15} strokeWidth={2} className="text-[#344054]" /></div>
                </div>
              </div>
              <div className="w-[74px]">
                <div className="h-[26px] flex items-center text-[19px] text-[#475467]">עוקבים</div>
                <div className="mt-[6px] h-[40px] rounded-full border border-[#d0d5dd] flex items-center pl-[6px]">
                  <div className="w-[28px] h-[28px] rounded-full bg-[#f2f4f7] flex items-center justify-center"><UserRound size={20} strokeWidth={1.6} className="text-[#344054]" /></div>
                  <ChevronDown size={18} strokeWidth={2} className="ml-[9px] text-[#344054]" />
                </div>
              </div>
            </div>
            <div className="mt-[25px] h-[28px] flex items-center gap-[12px]">
              <span className="text-[22px] text-[#475467]">Tags (2)</span>
              <div className="w-[21px] h-[21px] rounded-full border border-[#7ea2f2] flex items-center justify-center"><Plus size={15} strokeWidth={1.8} className="text-[#2f5fe6]" /></div>
            </div>
            <div className="mt-[7px] flex gap-[6px]">
              <div className="w-[103px] h-[33px] rounded-[6px] border border-[#d9dde3] flex items-center pl-[9px] gap-[8px] text-[18px] text-[#475467]">booked <X size={14} strokeWidth={1.8} className="text-[#98a2b3]" /></div>
              <div className="w-[75px] h-[33px] rounded-[6px] border border-[#d9dde3] flex items-center pl-[9px] gap-[8px] text-[18px] text-[#475467]">new <X size={14} strokeWidth={1.8} className="text-[#98a2b3]" /></div>
            </div>
          </div>
          <div className="mt-[13px] h-[38px] shrink-0 rounded-[6px] border border-[#eceef2] bg-white flex overflow-hidden text-[20px]">
            <div className="flex-1 bg-[#e9ebf0] font-medium text-[#1d2939] flex items-center justify-center">All fields</div>
            <div className="flex-1 border-x border-[#eceef2] text-[#475467] flex items-center justify-center">נא לא להפריע</div>
            <div className="flex-1 text-[#475467] flex items-center justify-center">פעולות</div>
          </div>
          <div className="mt-[12px] h-[53px] shrink-0 rounded-[8px] border border-[#d0d5dd] bg-white flex items-center pl-[12px] pr-[12px]">
            <Search size={20} strokeWidth={1.6} className="text-[#475467]" />
            <span className="ml-[7px] flex-1 text-[21px] text-[#475467]">Search fields and folders</span>
            <ListFilter size={20} strokeWidth={1.6} className="-mt-[6px] text-[#475467]" />
          </div>
          <div className="mt-[16px] flex-1 rounded-t-[8px] border border-[#eceef2] bg-white flex flex-col overflow-hidden">
            <div className="h-[68px] shrink-0 bg-[#f2f4f8] border-b border-[#eceef2] flex items-center pl-[24px] pr-[24px]">
              <span className="text-[20px] text-[#344054]">איש קשר</span>
              <ChevronUp size={22} strokeWidth={1.8} className="ml-auto text-[#475467]" />
            </div>
            <div className="pt-[17px] flex flex-col">
              <Field label="First name" value="Pembroke" />
              <Field label="Last name" value="Jacobsohn" />
              <Field label="אימייל" value="pjacobsohn8@histats.com" plus />
              <Field label="טלפון" value="--" plus muted>
                <span className="flex items-center gap-[10px] text-[17px] font-normal text-[#d0d5dd]">
                  בחר <ChevronDown size={18} strokeWidth={1.6} />
                </span>
              </Field>
              <Field label="Date of birth" value="--" muted />
              <Field label="Contact source" value="--" muted />
              <Field label="Contact type" value="Lead">
                <ChevronDown size={22} strokeWidth={1.6} className="text-[#344054]" />
              </Field>
              <Field label="Your Message" value="Your Message" tall muted />
              <Field label="בדיקה" />
            </div>
          </div>
        </div>
        <div className="w-[30px] shrink-0 bg-[#fafafa] border-x border-[#eceef2] relative">
          <div className="absolute left-[7px] top-[6px] w-[15px] h-[950px] rounded-full bg-[#bdbdbd]" />
        </div>
      </div>
    </div>
  );
}

function Rail() {
  const iconCls = 'text-[#1d2939]';
  const items: ReactNode[] = [
    <RecentIcon />,
    <NetworkIcon />,
    <OpportunityIcon size={32} color="#1d2939" />,
    <div className="relative">
      <Clipboard size={32} strokeWidth={2} className={iconCls} />
      <Check size={16} strokeWidth={2.5} className={`absolute left-[8px] top-[11px] ${iconCls}`} />
    </div>,
    <PenLine size={32} strokeWidth={2} className={iconCls} />,
    <Calendar size={32} strokeWidth={2} className={iconCls} />,
    <FileText size={32} strokeWidth={2} className={iconCls} />,
    <CircleDollarSign size={32} strokeWidth={2} className={iconCls} />,
  ];
  return (
    <div className="w-[48px] shrink-0 h-[1379px] flex flex-col relative">
      <div className="w-[48px] h-[48px] rounded-[10px] bg-white flex items-center justify-center">
        <CircleUserRound size={32} strokeWidth={2} className="text-[#2f6be6]" />
      </div>
      <div className="mt-[5px] flex flex-col">
        {items.map((it, i) => (
          <div key={i} className="h-[60px] flex items-center justify-center">{it}</div>
        ))}
      </div>
      <div className="mt-auto w-[48px] h-[48px] rounded-[10px] bg-white flex items-center justify-center">
        <Info size={30} strokeWidth={2} className="text-[#475467]" />
      </div>
      <div className="mt-[6px] w-[48px] h-[47px] rounded-[10px] bg-white flex items-center justify-center">
        <Keyboard size={30} strokeWidth={2} className="text-[#475467]" />
      </div>
      <div className="absolute left-[37px] top-[494px] w-[14px] h-[78px] rounded-full bg-[#7a7a7c]" />
    </div>
  );
}

export default function App() {
  return (
    <div className="w-[2880px] h-[1800px] overflow-hidden flex flex-col bg-[#12252a] relative [font-family:Inter,'Liberation_Sans',sans-serif]">
      <div className="absolute left-[9px] top-[9px] w-[14px] h-[14px] rounded-full bg-[#f6a93b] border-[2px] border-black z-10" />
      <TabStrip />
      <Toolbar />
      <div className="flex-1 flex min-h-0 bg-[#ebedf2]">
        <Sidebar />
        <div className="flex-1 flex flex-col min-w-0">
          <TopBar />
          <div className="flex-1 flex pl-[24px] pt-[17px]">
            <InboxColumn />
            <div className="ml-[23px] w-[1620px] h-[1391px] shrink-0 rounded-[16px] bg-[#f8f9fd] flex relative">
              <ListPane />
              <ConversationPane />
              <div className="absolute -left-[17px] top-[677px] w-[36px] h-[36px] rounded-full bg-white flex items-center justify-center">
                <ChevronLeft size={22} strokeWidth={2.4} className="text-[#1f2937]" />
              </div>
            </div>
            <div className="ml-[20px]"><ContactPanel /></div>
            <div className="ml-[15px]"><Rail /></div>
          </div>
        </div>
      </div>
    </div>
  );
}
